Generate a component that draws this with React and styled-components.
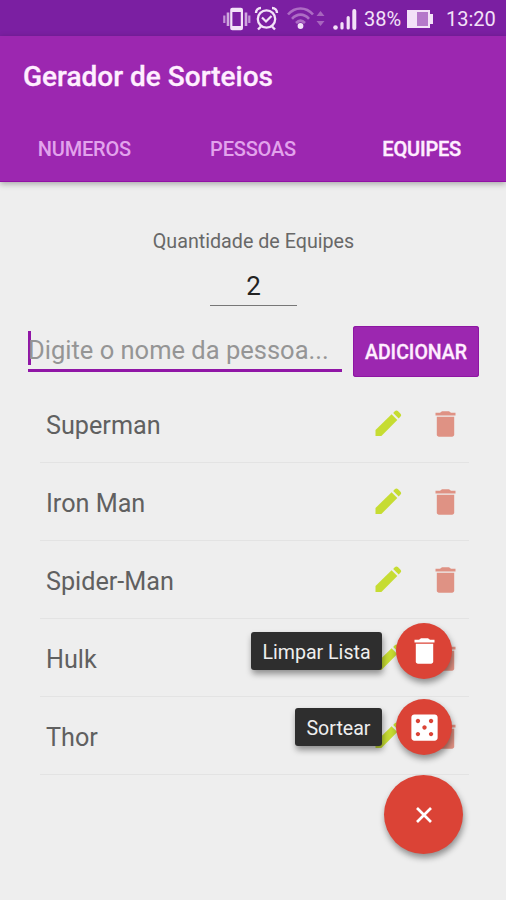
import React from 'react';
import styled, { createGlobalStyle, css } from 'styled-components';
import { MdCasino } from 'react-icons/md';

const GlobalStyle = createGlobalStyle`
  * {
    box-sizing: border-box;
  }

  body {
    margin: 0;
    background: #eeeeee;
    font-family: Roboto, 'Liberation Sans', sans-serif;
  }

  svg {
    display: block;
  }
`;

const Screen = styled.div`
  position: relative;
  width: 506px;
  height: 900px;
  overflow: hidden;
  background: #eeeeee;
`;

const StatusBar = styled.div`
  height: 36px;
  padding: 2px 11px 0 0;
  display: flex;
  align-items: center;
  justify-content: flex-end;
  background: #7b1fa2;
  color: #f3e2f8;
  font-size: 20px;
`;

const StatusIcons = styled.svg`
  width: 136px;
  height: 34px;
  margin-right: 7px;
`;

const Battery = styled.svg`
  width: 28px;
  height: 20px;
  margin: 0 12px 0 5px;
`;

const StatusText = styled.span`
  width: ${props => props.width}px;
  white-space: nowrap;
`;

const Header = styled.header`
  height: 146px;
  background: #9c27b0;
  border-bottom: 1px solid #9110a4;
  box-shadow: 0 2px 6px rgba(0, 0, 0, 0.3);
`;

const Title = styled.h1`
  margin: 0;
  padding: 0 23px;
  height: 81px;
  line-height: 82px;
  font-size: 28px;
  font-weight: 500;
  color: #ffeeff;
  -webkit-text-stroke: 0.3px #ffeeff;
`;

const Tabs = styled.nav`
  display: grid;
  grid-template-columns: repeat(3, 1fr);
`;

const Tab = styled.button`
  height: 64px;
  padding: 0;
  border: none;
  background: none;
  font: 500 20px/65px Roboto, sans-serif;
  letter-spacing: -0.2px;
  color: #e2a3ec;

  ${props =>
    props.active &&
    css`
      color: #ffeeff;
      -webkit-text-stroke: 0.4px #ffeeff;
    `};
`;

const Content = styled.main`
  display: flex;
  flex-direction: column;
`;

const Amount = styled.label`
  padding: 47px 0 0 1px;
  display: flex;
  flex-direction: column;
  align-items: center;
  font-size: 19.7px;
  line-height: 25px;
  color: #686868;
`;

const AmountValue = styled.span`
  width: 87px;
  height: 37px;
  margin-top: 15px;
  border-bottom: 1px solid #777777;
  text-align: center;
  font-size: 26px;
  line-height: 35px;
  color: #222222;
`;

const AddRow = styled.div`
  margin-top: 20px;
  padding: 0 27px 0 28px;
  display: flex;
  justify-content: space-between;
`;

const NameField = styled.div`
  width: 314px;
  height: 46px;
  display: flex;
  align-items: center;
  border-bottom: 3px solid #9016a6;
  font-size: 25.5px;
  white-space: nowrap;
  color: #959595;
`;

const Caret = styled.span`
  width: 3px;
  height: 34px;
  margin: 0 -3px 0 0;
  background: #9016a6;
`;

const Placeholder = styled.span`
  padding-top: 4px;
`;

const AddButton = styled.button`
  width: 126px;
  height: 51px;
  padding: 2px 0 0;
  border: none;
  border-radius: 3px;
  background: #9c27b0;
  box-shadow: inset 0 0 0 1px #8d16a2;
  font: 500 19.5px Roboto, sans-serif;
  color: #ffeeff;
  -webkit-text-stroke: 0.3px #ffeeff;
`;

const List = styled.ul`
  margin: 8px 37px 0 40px;
  padding: 0;
  list-style: none;
`;

const Row = styled.li`
  height: 78px;
  padding: 0 13px 0 6px;
  display: flex;
  align-items: center;
  border-bottom: 1px solid #e3e3e3;
`;

const Name = styled.span`
  flex: 1;
  padding-top: 4px;
  font-size: 25.2px;
  color: #606060;
`;

const RowIcon = styled.span`
  margin-left: 33px;
  color: ${props => props.color};
`;

const SpeedDial = styled.div`
  position: absolute;
  right: 43px;
  bottom: 46px;
  display: flex;
  flex-direction: column;
  align-items: flex-end;
`;

const Action = styled.div`
  height: 56px;
  margin: 0 11px 20px 0;
  display: flex;
  align-items: center;
`;

const ActionLabel = styled.span`
  width: ${props => props.width}px;
  height: 38px;
  margin-right: 14px;
  border-radius: 3px;
  background: #2e2e2e;
  box-shadow: 1px 4px 6px rgba(0, 0, 0, 0.4);
  text-align: center;
  font-size: 19.6px;
  line-height: 42px;
  color: #eeeeee;
`;

const Fab = styled.button`
  width: ${props => (props.$main ? 79 : 56)}px;
  height: ${props => (props.$main ? 79 : 56)}px;
  padding: 0;
  display: flex;
  align-items: center;
  justify-content: center;
  border: none;
  border-radius: 50%;
  background: #db4336;
  box-shadow: 1px 4px 6px rgba(0, 0, 0, 0.4);
  font-size: 35px;
  color: #ffffff;
`;

const people = ['Superman', 'Iron Man', 'Spider-Man', 'Hulk', 'Thor'];

const PencilIcon = () => (
  <svg width="27" height="27" viewBox="0 0 27 27" fill="currentColor">
    <path d="M.5 26v-6L16.6 4.3l5.7 5.7L6.4 26z" />
    <path d="M18.2 2.9l1.8-1.8c.9-.9 2-.9 2.9 0l2.6 2.6c.9.9.9 2 0 2.9l-1.8 1.8z" />
  </svg>
);

const TrashIcon = () => (
  <svg width="21" height="26" viewBox="0 0 21 26" fill="currentColor">
    <path d="M.5 1.8H5L7 .2h7l2 1.6h4.5v2.8H.5z" />
    <path d="M1.8 5.8h17.4v17.8c0 1.3-.9 2.2-2.2 2.2H4c-1.3 0-2.2-.9-2.2-2.2z" />
  </svg>
);

const StatusBarIcons = () => (
  <StatusIcons viewBox="221 2 136 34" fill="none" stroke="#f3e2f8">
    {/* vibrate */}
    <rect x="231.3" y="8.8" width="10.6" height="20.4" rx="1" strokeWidth="2.2" />
    <path d="M232 11h9M232 27h9" strokeWidth="2.2" />
    <path d="M228 12.5v13.5M246 12.5v13.5" strokeWidth="2.6" opacity="0.7" />
    <path d="M224.3 15.5v7.5M249.3 15.5v7.5" strokeWidth="2.2" opacity="0.6" />
    {/* alarm */}
    <circle cx="266.5" cy="19" r="8.7" strokeWidth="2.3" />
    <path d="M262 17.5l4 4 5.5-5.5" strokeWidth="2.2" />
    <path d="M256 13c0-3 2-5 5-5M277 13c0-3-2-5-5-5" strokeWidth="2.4" />
    <path d="M261 26.5l-3 3M272 26.5l3 3" strokeWidth="2.4" />
    {/* wifi */}
    <g stroke="#ad6cc4" strokeWidth="2.6">
      <path d="M288 14.5c7-8 18-8 25 0" />
      <path d="M292 18.8c5-5.5 12-5.5 17 0" />
      <path d="M296 23c3-3 6-3 9 0" />
    </g>
    <circle cx="300.5" cy="26" r="2.9" fill="#f3e2f8" stroke="none" />
    <path d="M316.5 16l4-5 4 5zM316.5 21l4 5 4-5z" fill="#a765be" stroke="none" />
    {/* signal */}
    <circle cx="335.5" cy="27.5" r="2.3" fill="#f3e2f8" stroke="none" />
    <g strokeWidth="3.2" strokeLinecap="round">
      <path d="M342 28v-4.5M348.2 28v-10.5" />
      <path d="M354.3 28v-17" strokeWidth="4" />
    </g>
  </StatusIcons>
);

const App = () => (
  <Screen>
    <GlobalStyle />
    <StatusBar>
      <StatusBarIcons />
      <StatusText width={37}>38%</StatusText>
      <Battery viewBox="0 0 28 20">
        <path d="M1 1h23v4h3v10h-3v4H1z" fill="#f3e2f8" />
        <path d="M11 3h11v14H11z" fill="#b579ca" />
      </Battery>
      <StatusText width={49}>13:20</StatusText>
    </StatusBar>
    <Header>
      <Title>Gerador de Sorteios</Title>
      <Tabs>
        <Tab>NUMEROS</Tab>
        <Tab>PESSOAS</Tab>
        <Tab active>EQUIPES</Tab>
      </Tabs>
    </Header>
    <Content>
      <Amount>
        Quantidade de Equipes
        <AmountValue>2</AmountValue>
      </Amount>
      <AddRow>
        <NameField>
          <Caret />
          <Placeholder>Digite o nome da pessoa...</Placeholder>
        </NameField>
        <AddButton>ADICIONAR</AddButton>
      </AddRow>
      <List>
        {people.map(name => (
          <Row key={name}>
            <Name>{name}</Name>
            <RowIcon color="#c6dc32">
              <PencilIcon />
            </RowIcon>
            <RowIcon color="#df9284">
              <TrashIcon />
            </RowIcon>
          </Row>
        ))}
      </List>
    </Content>
    <SpeedDial>
      <Action>
        <ActionLabel width={131}>Limpar Lista</ActionLabel>
        <Fab>
          <TrashIcon />
        </Fab>
      </Action>
      <Action>
        <ActionLabel width={87}>Sortear</ActionLabel>
        <Fab>
          <MdCasino />
        </Fab>
      </Action>
      <Fab $main>
        <svg width="18" height="18" viewBox="0 0 18 18" stroke="#ffffff" strokeWidth="2.7">
          <path d="M2 2l14 14M16 2L2 16" />
        </svg>
      </Fab>
    </SpeedDial>
  </Screen>
);

export default App;
